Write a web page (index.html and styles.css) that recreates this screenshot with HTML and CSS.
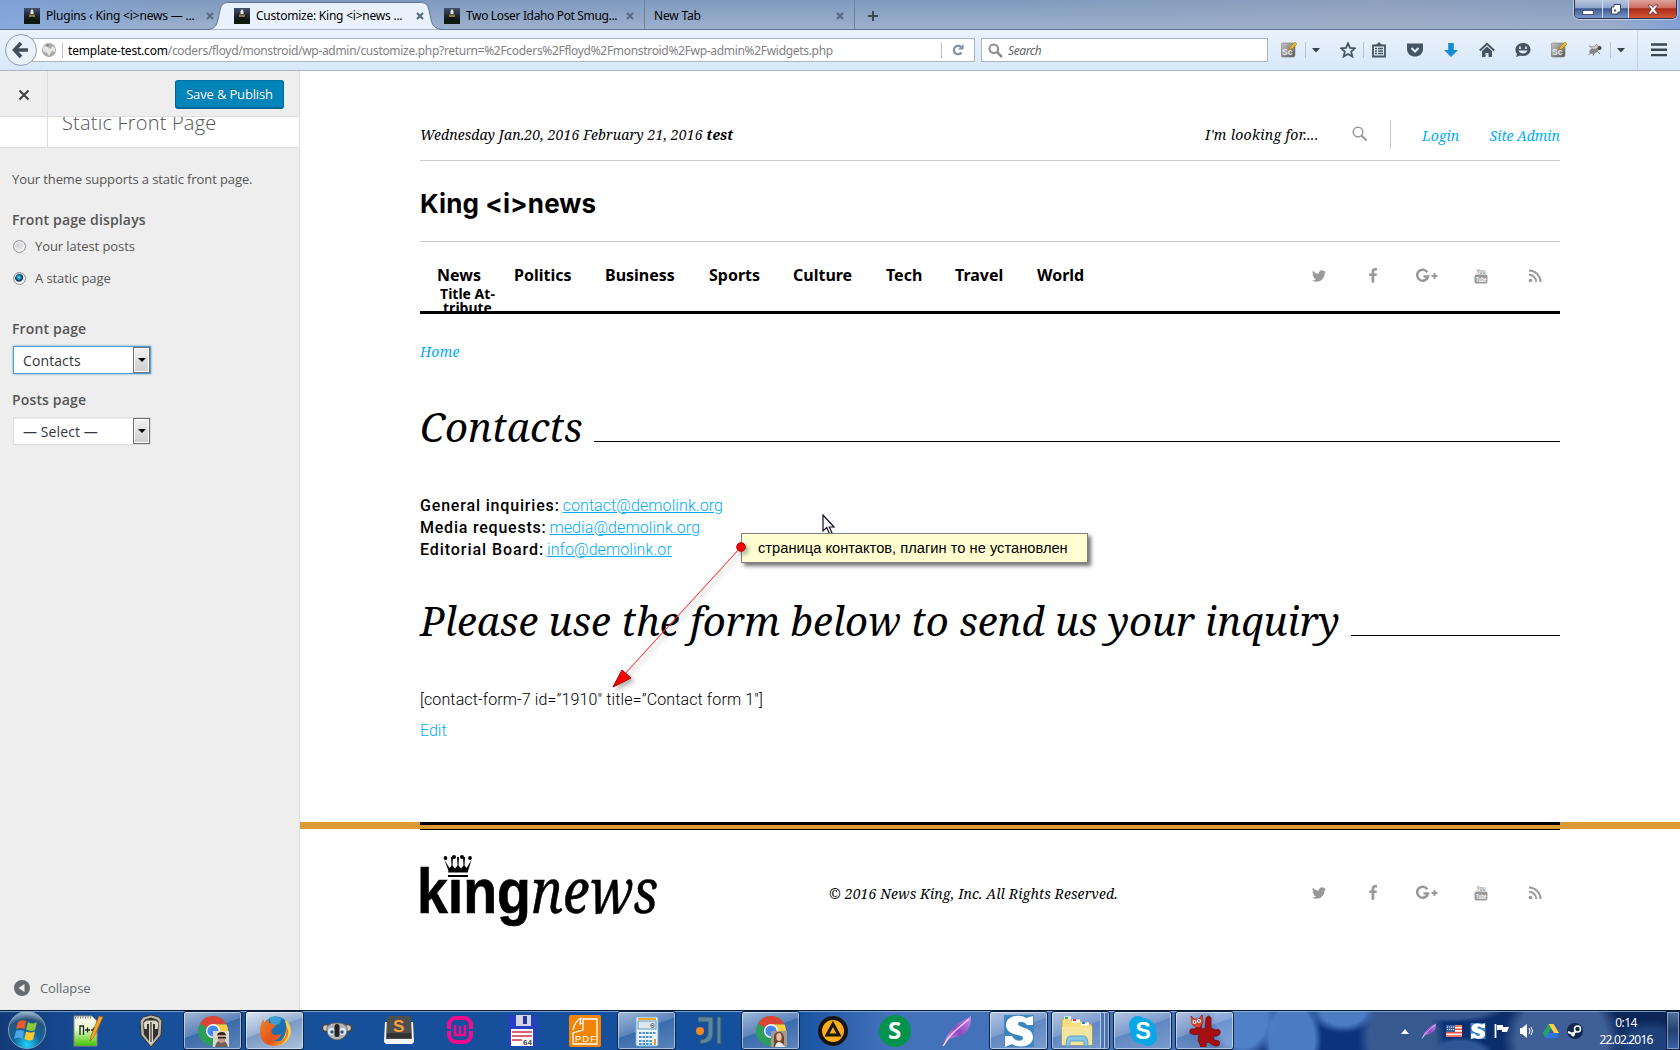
FILE: index.html
```html
<!DOCTYPE html>
<html lang="en">
<head>
<meta charset="utf-8">
<title>Customize: King &lt;i&gt;news</title>
<link rel="stylesheet" href="styles.css">
</head>
<body>
<svg class="defs" width="0" height="0">
  <defs>
    <linearGradient id="sky" x1="0" y1="0" x2="0" y2="1"><stop offset="0" stop-color="#42506b"/><stop offset=".55" stop-color="#1a2029"/><stop offset="1" stop-color="#121a10"/></linearGradient>
    <linearGradient id="steel" x1="0" y1="0" x2="1" y2="1"><stop offset="0" stop-color="#c9c9c9"/><stop offset="1" stop-color="#555"/></linearGradient>
    <radialGradient id="orb" cx=".5" cy=".9" r=".95"><stop offset="0" stop-color="#21d4ff"/><stop offset=".4" stop-color="#12649b"/><stop offset=".72" stop-color="#27527d"/><stop offset="1" stop-color="#c5dae4"/></radialGradient>
    <linearGradient id="fox" x1="0" y1="0" x2="1" y2="1"><stop offset="0" stop-color="#f0832b"/><stop offset=".6" stop-color="#e3521a"/><stop offset="1" stop-color="#f8ba2d"/></linearGradient>
    <linearGradient id="plume" x1="0" y1="1" x2="1" y2="0"><stop offset="0" stop-color="#e9a6ef"/><stop offset=".5" stop-color="#8d49c1"/><stop offset="1" stop-color="#c78be8"/></linearGradient>
    <linearGradient id="green" x1="0" y1="0" x2="0" y2="1"><stop offset="0" stop-color="#fff"/><stop offset=".45" stop-color="#e3f9c4"/><stop offset="1" stop-color="#3fc400"/></linearGradient>
    <symbol id="fav" viewBox="0 0 16 16"><rect width="16" height="16" fill="url(#sky)"/><path d="M6.500 6V3L8 1l1.500 2v3z" fill="#e8e4da"/><path d="M5 9V6.500h6V9z" fill="#8b7b45"/><path d="M0 11h5v-2h6v2h5v5H0z" fill="#10170f"/></symbol>
    <symbol id="x" viewBox="0 0 10 10"><path d="M2 2l6 6M8 2L2 8" stroke="#5c6c84" stroke-width="2.2"/></symbol>
    <symbol id="sc" viewBox="0 0 16 16"><rect y="1" width="14" height="14" rx="2" fill="url(#steel)" stroke="#777" stroke-width=".6"/><text x="1" y="13" font-family="Liberation Sans" font-size="8.500" font-weight="700" fill="#eee">Sc</text><path d="M8 8l1-3 5-5 2 2-5 5z" fill="#e9b929" stroke="#8a6a16" stroke-width=".5"/></symbol>
    <symbol id="tw" viewBox="0 0 1792 1792"><path d="M1684 408q-67 98-162 167 1 14 1 42 0 130-38 259.500t-115.500 248.500-184.500 210.500-258 146-323 54.500q-271 0-496-145 35 4 78 4 225 0 401-138-105-2-188-64.500t-114-159.500q33 5 61 5 43 0 85-11-112-23-185.500-111.500t-73.500-205.500v-4q68 38 146 41-66-44-105-115t-39-154q0-88 44-163 121 149 294.500 238.500t371.500 99.500q-8-38-8-74 0-134 94.500-228.500t228.500-94.500q140 0 236 102 109-21 205-78-37 115-142 178 93-10 186-50z" fill="#999"/></symbol>
    <symbol id="fb" viewBox="0 0 1792 1792"><path d="M1343 12v264h-157q-86 0-116 36t-30 108v189h293l-39 296h-254v759h-306v-759h-255v-296h255v-218q0-186 104-288.500t277-102.500q147 0 228 12z" fill="#999"/></symbol>
    <symbol id="gp" viewBox="0 0 22 16"><path d="M11.300 4.200A5.500 5.500 0 1 0 12 8.600H7.500" fill="none" stroke="#999" stroke-width="2.500"/><path d="M18.500 5v6M15.500 8h6" stroke="#999" stroke-width="2"/></symbol>
    <symbol id="yt" viewBox="0 0 14 17"><text x="2.500" y="6.500" font-family="Liberation Sans" font-size="8" font-weight="700" fill="#999" textLength="9" lengthAdjust="spacingAndGlyphs">You</text><rect x=".5" y="7.500" width="13" height="9" rx="1.800" fill="#999"/><text x="2" y="15" font-family="Liberation Sans" font-size="8" font-weight="700" fill="#fff" textLength="10.500" lengthAdjust="spacingAndGlyphs">Tube</text></symbol>
    <symbol id="rs" viewBox="0 0 14 14"><circle cx="2.500" cy="11.500" r="1.800" fill="#999"/><path d="M1 5.800A7.200 7.200 0 0 1 8.200 13M1 1.500A11.500 11.500 0 0 1 12.500 13" fill="none" stroke="#999" stroke-width="2"/></symbol>
    <symbol id="chrome" viewBox="0 0 32 32"><circle cx="16" cy="16" r="15" fill="#2d9d5c"/><path d="M16 16L3 8.500A15 15 0 0 1 29.500 9.500H16z" fill="#dc4437"/><path d="M16 9.500h13.500A15 15 0 0 1 15.500 31L22 19z" fill="#fdce42"/><circle cx="16" cy="16" r="7" fill="#fff"/><circle cx="16" cy="16" r="5.600" fill="#4587f3"/></symbol>
    <symbol id="plumeicon" viewBox="0 0 32 32"><path d="M3 31C4 22 9 14 18 8L30 1c0 7-1 12-5 16-5 5-12 5-17 7z" fill="url(#plume)"/><path d="M2 31C8 20 16 14 28 4" stroke="#f7d8ff" stroke-width="1.200" fill="none"/></symbol>
    <symbol id="ess" viewBox="0 0 32 32"><rect x="1" width="30" height="32" fill="#3c87be"/><path d="M30 1v9h-6c-3-4-9-4-9-1 0 4 15 3 15 13 0 11-16 11-21 7l-7 3V21h7c3 6 11 6 11 2 0-4-17-2-17-13C3 0 18-1 23 3z" fill="#fff"/></symbol>
  </defs>
</svg>

<header class="browser">
  <div class="tabstrip">
    <div class="tab first"><svg class="fav"><use href="#fav"/></svg><span class="tab-t t1">Plugins ‹ King &lt;i&gt;news — ...</span><svg class="x"><use href="#x"/></svg></div>
    <div class="tab active"><svg class="tabshape" viewBox="0 0 236 30"><path d="M0 29.500C10 28 9 23 12 10 13.500 4 16 2.500 21 2.500H212c5 0 7.500 1.500 9 7.500 3 13 2 18 13 19.500" fill="#e9f2fc" stroke="#5e7596"/></svg><svg class="fav"><use href="#fav"/></svg><span class="tab-t t2">Customize: King &lt;i&gt;news ...</span><svg class="x"><use href="#x"/></svg></div>
    <div class="tab third"><svg class="fav"><use href="#fav"/></svg><span class="tab-t t3">Two Loser Idaho Pot Smug...</span><svg class="x"><use href="#x"/></svg></div>
    <div class="tab sep"><span class="tab-t t4">New Tab</span><svg class="x"><use href="#x"/></svg></div>
    <div class="tab plus"><svg width="12" height="12"><path d="M6 1v10M1 6h10" stroke="#3c4b50" stroke-width="2"/></svg></div>
    <div class="winbtns"><span class="wb min"><i></i></span><span class="wb max"><svg width="12" height="12"><path d="M4 1.500h6.500V9H8v2H1.500V4H4z" fill="#fff" stroke="#3b4965"/><path d="M4 6.500h2v2H4z" fill="#3f547f"/></svg></span><span class="wb close"><svg width="12" height="11"><path d="M1 1h3l2 2.500L8 1h3L7.800 5.500 11 10H8L6 7.500 4 10H1l3.200-4.500z" fill="#fff" stroke="#5e3a43" stroke-width=".8"/></svg></span></div>
  </div>
  <div class="navbar">
    <svg class="back" viewBox="0 0 34 34"><circle cx="17" cy="17" r="15.500" fill="#e9f2fb" stroke="#8c9eb4"/><path d="M17 10l-6.500 7 6.500 7M11 17h13" fill="none" stroke="#424f5a" stroke-width="3.600"/></svg>
    <div class="url"><svg class="globe" viewBox="0 0 16 16"><circle cx="8" cy="8" r="7" fill="#a9a9a9"/><path d="M2 5l4-3 3 1-2 3 3 1 1-3 3 2v4l-3-1-2 3-1 2-2-3-4-2z" fill="#e6e6e6"/><path d="M6 2l3 1-2 2-3-1z" fill="#888"/></svg><i class="vs"></i><span class="addr"><b>template-test.com</b>/coders/floyd/monstroid/wp-admin/customize.php?return=%2Fcoders%2Ffloyd%2Fmonstroid%2Fwp-admin%2Fwidgets.php</span><i class="vs r"></i><svg class="reload" viewBox="0 0 12 12"><path d="M9.500 8.500A4.200 4.200 0 1 1 9 3" fill="none" stroke="#8290a4" stroke-width="2.200"/><path d="M11.500 0v5.500H6z" fill="#8290a4"/></svg></div>
    <div class="search"><svg width="15" height="15" viewBox="0 0 15 15"><circle cx="5.800" cy="5.800" r="4.300" fill="none" stroke="#8d8d8d" stroke-width="2"/><path d="M9 9l5 5" stroke="#8d8d8d" stroke-width="2.500"/></svg><em>Search</em></div>
    <div class="tools">
      <svg viewBox="0 0 16 16"><use href="#sc"/></svg><i class="vs"></i><svg class="caret" viewBox="0 0 8 5"><path d="M0 0h8L4 4.500z" fill="#38434d"/></svg>
      <svg class="m1" viewBox="0 0 16 16"><path d="M8 1.300l2 4.500 4.900.5-3.700 3.300 1.100 4.900L8 12l-4.300 2.500 1.100-4.900L1.100 6.300 6 5.800z" fill="none" stroke="#475461" stroke-width="1.800"/></svg><i class="vs v2"></i>
      <svg class="m2" viewBox="0 0 16 16"><path d="M2 3.500h12v11H2z" fill="none" stroke="#475461" stroke-width="1.800"/><path d="M5 3l3-3 3 3z" fill="#475461"/><path d="M4 6.500h2m1 0h5M4 9h2m1 0h5M4 11.500h2m1 0h5" stroke="#475461" stroke-width="1.500"/></svg>
      <svg class="m3" viewBox="0 0 16 16"><path d="M0 1.500h16V7c0 10-16 10-16 0z" fill="#475461"/><path d="M4.500 6L8 9.500 11.500 6" fill="none" stroke="#e4eefa" stroke-width="2"/></svg>
      <svg class="m3" viewBox="0 0 16 16"><path d="M5.200 1h5.600v7H15l-7 7-7-7h4.200z" fill="#168dd6"/></svg>
      <svg class="m3" viewBox="0 0 16 16"><path d="M.8 8.500L8 1.800l7.200 6.700" fill="none" stroke="#475461" stroke-width="2"/><path d="M3 9l5-4.500L13 9v6H9.500v-4h-3v4H3z" fill="#475461"/></svg>
      <svg class="m3" viewBox="0 0 16 16"><path d="M8 1c10 0 10 13 0 13-2 0-3-.3-4 0L1 15l1-3C-2 7 2 1 8 1z" fill="#475461"/><path d="M5 4.500v2.500m6-2.500v2.500" stroke="#e4eefa" stroke-width="1.700"/><path d="M3.500 8.500h9c-1.500 4-7.500 4-9 0z" fill="#e4eefa"/></svg>
      <svg class="m3" viewBox="0 0 16 16"><use href="#sc"/></svg>
      <svg class="m3" viewBox="0 0 16 16"><ellipse cx="7" cy="8.500" rx="5" ry="2.800" transform="rotate(-25 7 8.500)" fill="#888"/><circle cx="12.500" cy="6" r="2" fill="#444"/><path d="M6 7L2 4l5 1 3-3 1 4" stroke="#888" stroke-width=".7" fill="#d5d5d5"/><path d="M4 11l-3 2M7 11l-1 3m4-5l3 3" stroke="#777" stroke-width=".8" fill="none"/></svg><i class="vs v3"></i><svg class="caret" viewBox="0 0 8 5"><path d="M0 0h8L4 4.500z" fill="#38434d"/></svg><i class="vs v4"></i>
      <svg class="burger" viewBox="0 0 16 14"><path d="M0 1.500h16M0 6.800h16M0 12.100h16" stroke="#3b4852" stroke-width="2.400"/></svg>
    </div>
  </div>
</header>

<div class="page">
  <aside class="customizer">
    <div class="actions"><div class="closebox"><svg width="12" height="12"><path d="M1.500 1.500l9 9M10.500 1.500l-9 9" stroke="#444" stroke-width="2.200"/></svg></div><button class="publish">Save &amp; Publish</button></div>
    <div class="section-title"><div class="backbox"></div><h3>Static Front Page</h3></div>
    <div class="controls">
      <p class="desc">Your theme supports a static front page.</p>
      <div class="label l1">Front page displays</div>
      <div class="radio"><i></i>Your latest posts</div>
      <div class="radio on"><i></i>A static page</div>
      <div class="label l2">Front page</div>
      <div class="select focus"><span>Contacts</span><b></b></div>
      <div class="label l3">Posts page</div>
      <div class="select"><span>— Select —</span><b></b></div>
    </div>
    <div class="collapse"><svg width="16" height="16"><circle cx="8" cy="8" r="8" fill="#656b70"/><path d="M10.500 4v8l-6-4z" fill="#eee"/></svg>Collapse</div>
  </aside>

  <main class="preview">
    <div class="wrap">
      <div class="topbar"><div class="date">Wednesday Jan.20, 2016 February 21, 2016 <b>test</b></div><div class="looking">I'm looking for....</div><svg class="mag" width="16" height="16" viewBox="0 0 16 16"><circle cx="6" cy="6" r="4.800" fill="none" stroke="#999" stroke-width="1.500"/><path d="M9.500 9.500l5 5" stroke="#999" stroke-width="2"/></svg><div class="account"><a class="login">Login</a><a class="admin">Site Admin</a></div></div>
      <div class="brand">King &lt;i&gt;news</div>
      <nav class="menu"><ul><li>News<small>Title At-<br>tribute</small></li><li>Politics</li><li>Business</li><li>Sports</li><li>Culture</li><li>Tech</li><li>Travel</li><li>World</li></ul>
        <div class="social"><svg class="i-tw"><use href="#tw"/></svg><svg class="i-fb"><use href="#fb"/></svg><svg class="i-gp"><use href="#gp"/></svg><svg class="i-yt"><use href="#yt"/></svg><svg class="i-rs"><use href="#rs"/></svg></div></nav>
      <div class="crumb"><a>Home</a></div>
      <h1 class="title h-a"><span>Contacts</span></h1>
      <div class="contacts"><p class="c1"><b>General inquiries:</b> <a>contact@demolink.org</a></p><p class="c2"><b>Media requests:</b> <a>media@demolink.org</a></p><p class="c3"><b>Editorial Board:</b> <a>info@demolink.or</a></p></div>
      <h1 class="title h-b"><span>Please use the form below to send us your inquiry</span></h1>
      <p class="shortcode">[contact-form-7 id=”1910″ title=”Contact form 1″]</p>
      <p class="edit"><a>Edit</a></p>
    </div>
    <footer>
      <div class="stripe"><i></i></div>
      <div class="wrap foot">
        <svg class="logo" viewBox="0 0 237 75" width="237" height="75"><text x="-3" y="59" class="lk" textLength="114" lengthAdjust="spacingAndGlyphs">kıng</text><text x="111" y="59" class="ln" textLength="127" lengthAdjust="spacingAndGlyphs">news</text><path d="M28 18.500h20v-1.500l3.500-11-5 8-2-2.500.5-8.500h-2l.5 8.500-2.500 3-2.500-3 .5-8.500h-2l.5 8.500-2.500 3-2.500-3 .5-8.500h-2l.5 8.500-2 2.500-5-8 4 11z"/><path d="M28 21h20v2H28z"/><g><circle cx="25.500" cy="4" r="1.900"/><circle cx="34" cy="3" r="2"/><circle cx="42" cy="3" r="2"/><circle cx="50" cy="4" r="1.900"/></g></svg>
        <div class="copy">© 2016 News King, Inc. All Rights Reserved.</div>
        <div class="social"><svg class="i-tw"><use href="#tw"/></svg><svg class="i-fb"><use href="#fb"/></svg><svg class="i-gp"><use href="#gp"/></svg><svg class="i-yt"><use href="#yt"/></svg><svg class="i-rs"><use href="#rs"/></svg></div>
      </div>
    </footer>
  </main>
</div>

<svg class="pointer" width="14" height="22" viewBox="0 0 14 22"><path d="M1 1v16l3.800-3.500L7.500 20l2.500-1-2.700-6H12z" fill="#fff" stroke="#0b0b20" stroke-width="1.200"/></svg>
<div class="note">страница контактов, плагин то не установлен</div>
<svg class="arrow" width="150" height="160" viewBox="600 540 150 160"><path d="M741 547L622 677" stroke="#ff3a3a" stroke-width="1.100"/><path d="M613 687l9-17 9 8z" fill="#f00" stroke="#900"/><circle cx="741" cy="547" r="4.300" fill="#f00" stroke="#a00"/></svg>

<footer class="taskbar">
  <div class="start"><svg width="40" height="38" viewBox="0 0 40 38"><circle cx="20" cy="19" r="18.500" fill="url(#orb)" stroke="#7da4bd"/><path d="M11 11q4-3 8-1l-1.500 8q-4-2-8.500 0z" fill="#ef5a2b"/><path d="M21 11q4 3 9 0l-2 8q-4 2-9-.5z" fill="#8fc73e"/><path d="M9 20q4-2 8 0l-1.500 8q-4-3-8.500 0z" fill="#4aa6e8"/><path d="M19 20.500q4 2 9 0l-2 8q-4 2-8.500-.5z" fill="#fcc72c"/></svg></div>
  <div class="apps">
    <div class="app"><svg viewBox="0 0 32 32"><path d="M1 1h18l5 5v25H1z" fill="url(#green)" stroke="#888"/><path d="M2 2.500h16" stroke="#777" stroke-dasharray="1 1.500" stroke-width="2"/><path d="M7 20V11h3.500v9M12 15h5m-2.500-2.500v5M18 15h5m-2.500-2.500v5" stroke="#222" stroke-width="1.300" fill="none"/><path d="M17 26l1-5L26 1l4 1-9 20z" fill="#f3a727" stroke="#9d5b14" stroke-width=".7"/></svg></div>
    <div class="app"><svg viewBox="0 0 32 32"><path d="M16 0l8 2 3 4-1 14-10 12-10-12L5 6l3-4z" fill="#b9b5a9" stroke="#35332e"/><path d="M16 2.500l6 2 2 3-1 12-7 9-7-9-1-12 2-3z" fill="#34322f"/><path d="M8.500 8l3-2.500h9l3 2.500-1 6h-2.500V9H18v18l-2 2.500L14 27V9h-2v5H9.500z" fill="#d8d4c6"/><path d="M16 7v20" stroke="#34322f" stroke-width="1.200"/></svg></div>
    <div class="app open"><svg viewBox="0 0 32 32"><use href="#chrome"/><rect x="16" y="16" width="16" height="16" fill="#dcd7cd"/><path d="M18 32q1-6 6-7 6 1 7 7z" fill="#70615d"/><ellipse cx="24.500" cy="23" rx="4" ry="5" fill="#c39b83"/><path d="M20 21q0-4 5-4 4 0 4 4l-1-1h-7z" fill="#33261f"/><path d="M21 22h8v1.500h-3.500l-.5-.5-.5.5H21z" fill="#222"/></svg></div>
    <div class="app open lit"><svg viewBox="0 0 32 32"><circle cx="17" cy="14.500" r="13" fill="#1c6fb0"/><path d="M10 3q6-4 13 1l-3 5-7 2z" fill="#3ba0d4"/><path d="M27 5q8 9 3 18-3 6-12 8 8-8 9-15 1-6-1-10z" fill="#fbd34a"/><path d="M4 4l2 4 4-4v4q4 0 7 2.500l-4 3.500q-2 5 3 6 4 0 6-1-1 6-8 6 9 4 13-5 1-5 0-9 4 6 1 12-4 8-13 8Q2 30 1 18q0-8 3-14z" fill="url(#fox)"/></svg></div>
    <div class="app"><svg viewBox="0 0 32 32"><circle cx="5" cy="13" r="4.500" fill="#454545"/><circle cx="27" cy="13" r="4.500" fill="#454545"/><circle cx="5" cy="13" r="2.800" fill="#ccc"/><circle cx="27" cy="13" r="2.800" fill="#ccc"/><path d="M6 12q4-5 10-4 6-1 10 4 1 8-4 11-3 2-6 2t-6-2q-5-3-4-11z" fill="#b5b5b5" stroke="#555" stroke-width=".7"/><circle cx="10.500" cy="16.500" r="3.500" fill="#def"/><circle cx="21.500" cy="16.500" r="3.500" fill="#def"/><circle cx="11" cy="17" r="1.800" fill="#456"/><circle cx="21" cy="17" r="1.800" fill="#456"/><rect x="13.500" y="9" width="5" height="13" rx="2.500" fill="#222"/></svg></div>
    <div class="app"><svg viewBox="0 0 32 32"><path d="M2 7h28l1 20-2 2H3l-2-2z" fill="#f5f5f5"/><path d="M4 3q0-2 2-2h20q2 0 2 2l1 21H3z" fill="#4f4f4f"/><path d="M4 18h24v5H4z" fill="#333"/><text x="10" y="17" font-family="Liberation Sans" font-size="17" font-weight="700" fill="#f9a13a">S</text></svg></div>
    <div class="app"><svg viewBox="0 0 32 32"><rect x="4" y="3" width="22" height="24" rx="7" fill="none" stroke="#f20d8e" stroke-width="4"/><path d="M0 15h6.500m17 0H32" stroke="#185099" stroke-width="2"/><path d="M10 10v10h10V10M15 11v8" fill="none" stroke="#f20d8e" stroke-width="2.500"/></svg></div>
    <div class="app"><svg viewBox="0 0 32 32"><path d="M1 0h27l2 2v30H1z" fill="#273fc1"/><path d="M9 0h15v11H9z" fill="#d5d5e8"/><path d="M16 1h4v8h-4z" fill="#2036a0"/><path d="M4 14h22v17H4z" fill="#fff"/><path d="M5 17h20M5 21h20M5 25h10" stroke="#d42e45" stroke-width="1.300"/><text x="16" y="29.500" font-family="Liberation Sans" font-size="8" font-weight="700" fill="#444">64</text></svg></div>
    <div class="app"><svg viewBox="0 0 32 32"><rect width="32" height="32" rx="2" fill="#f28406"/><path d="M14 4h14v25H4V18l10-3zM4 15q2-9 8-12l-1 6 3-1" fill="none" stroke="#fff" stroke-width="1.300"/><rect x="5" y="18" width="22" height="10" fill="#f28406"/><text x="6" y="27" font-family="Liberation Sans" font-size="9.500" fill="#fff" textLength="21">PDF</text></svg></div>
    <div class="app open"><svg viewBox="0 0 32 32"><rect x="5" y="2" width="22" height="29" rx="1.500" fill="#eaf4fb" stroke="#6baed8"/><rect x="7" y="6" width="18" height="8" fill="#dce7ed" stroke="#689ab9"/><path d="M7 4h18" stroke="#f5a623" stroke-width="2"/><text x="19" y="13" font-family="Liberation Mono" font-size="8" fill="#345">0</text><path d="M8 18h17M8 22h13M8 26h13M8 29h13" stroke="#4b92c8" stroke-width="2" stroke-dasharray="2.500 1"/><path d="M23 24h2v6h-2z" fill="#f29a2e"/></svg></div>
    <div class="app"><svg viewBox="0 0 32 32"><path d="M5 2h15v17q0 9-13 10v-4q8-1 8-7V7H5z" fill="#5a879c" stroke="#305673"/><path d="M24 2h4v27h-4z" fill="#5a879c" stroke="#305673"/><circle cx="7" cy="16" r="4" fill="#f48a1c"/></svg></div>
    <div class="app open"><svg viewBox="0 0 32 32"><use href="#chrome"/><rect x="16" y="16" width="16" height="16" fill="#a49a8b"/><path d="M19 32V21q1-4 5-4t5 5v10z" fill="#71442e"/><ellipse cx="24" cy="22" rx="2.700" ry="4" fill="#e5bea4"/><path d="M20 32q1-5 4-5t6 5z" fill="#e9e7e8"/></svg></div>
    <div class="app"><svg viewBox="0 0 32 32"><circle cx="16" cy="16" r="15" fill="#181510"/><circle cx="16" cy="16" r="11" fill="#faad19"/><path d="M16 9l6 11H10z" fill="none" stroke="#1b1710" stroke-width="3"/></svg></div>
    <div class="app"><svg viewBox="0 0 32 32"><circle cx="16" cy="16" r="16" fill="#04934d"/><text x="9" y="24" font-family="Open Sans" font-weight="700" font-size="24" fill="#fff">S</text></svg></div>
    <div class="app"><svg viewBox="0 0 32 32"><use href="#plumeicon"/></svg></div>
    <div class="app open"><svg viewBox="0 0 32 32"><use href="#ess"/></svg></div>
    <div class="app open stack"><svg viewBox="0 0 32 32"><path d="M1 4h8l2 2h9l2 3h8l1 2v19H1z" fill="#f6df83" stroke="#c2a24b"/><path d="M3 3h7M11 6h8M20 9h8" stroke="#fff" stroke-width="3"/><path d="M4 3h3" stroke="#21b53d" stroke-width="2"/><path d="M12 5h3" stroke="#e5322a" stroke-width="2"/><path d="M21 8h3" stroke="#2b82d9" stroke-width="2"/><path d="M1 12h30v18H1z" fill="#f5e49c"/><path d="M5 31q0-10 4-10h14q4 0 4 10h-4v-5H9v5z" fill="#86c5e5" stroke="#5aa2ca"/></svg></div>
    <div class="app open"><svg viewBox="0 0 32 32"><circle cx="11" cy="10" r="9" fill="#08a8e8"/><circle cx="21" cy="22" r="9" fill="#08a8e8"/><circle cx="16" cy="16" r="13" fill="#08a8e8"/><text x="8.500" y="24" font-family="Liberation Sans" font-weight="700" font-size="23" fill="#fff">S</text></svg></div>
    <div class="app open"><svg viewBox="0 0 32 32"><path d="M2 1l3 3h5l3-4 1 7-2 5q2 3 4 2l1-11q3-4 5 0v10q5 3 7 1 4 2 1 6-4 2-6 1l1 4 5 1q2 5-3 5-5-1-7-4l-3 1v5q-3 2-5-1l-3-7 1-6q-5 2-9-1-1-5 4-4l3-1-5-4z" fill="#a60f12" stroke="#650808" stroke-width=".7"/><path d="M2 1l3 3h5l3-4 1 7-3 5H6L2 8z" fill="#d9402f"/><circle cx="5.500" cy="7" r="2" fill="#fff"/><circle cx="10" cy="6" r="2" fill="#fff"/><circle cx="5.500" cy="7" r=".8"/><circle cx="10" cy="6" r=".8"/></svg></div>
  </div>
  <div class="tray">
    <svg class="up" viewBox="0 0 8 5"><path d="M4 0l4 5H0z" fill="#fff"/></svg>
    <svg viewBox="0 0 32 32"><use href="#plumeicon"/></svg>
    <svg viewBox="0 0 16 16"><rect y="2" width="16" height="12" fill="#fff"/><path d="M0 3h16M0 6.300h16M0 9.600h16M0 13h16" stroke="#ed4b3c" stroke-width="1.600"/><rect y="2" width="9" height="7" fill="#3661a6"/><path d="M1 4h7M1 6.500h7" stroke="#fff" stroke-dasharray="1 1"/></svg>
    <svg viewBox="0 0 32 32"><use href="#ess"/></svg>
    <svg viewBox="0 0 16 16"><path d="M1.500 1v14" stroke="#fff" stroke-width="1.800"/><path d="M3 2h6v2h6l-2 5H8V7H3z" fill="#fff"/></svg>
    <svg viewBox="0 0 16 16"><path d="M2 5h2l5-4v14l-5-4H2z" fill="#fff"/><path d="M11 5q2 3 0 6M13 4q3 4 0 8" stroke="#fff" fill="none"/></svg>
    <svg viewBox="0 0 16 16"><path d="M5.500 1h5L16 10h-5z" fill="#fed14b"/><path d="M5.500 1L0 10l2.500 5L8 5.500z" fill="#21a566"/><path d="M5 10h11l-2.500 5h-11z" fill="#2e74e8"/></svg>
    <svg viewBox="0 0 16 16"><circle cx="8" cy="8" r="8" fill="#10284e"/><circle cx="10.500" cy="6" r="3" fill="none" stroke="#fff" stroke-width="1.600"/><path d="M1 9l5 2 3-3" stroke="#fff" stroke-width="2.200" fill="none"/><circle cx="6" cy="11.500" r="2" fill="#fff"/></svg>
  </div>
  <div class="clock"><span class="time">0:14</span><span class="day">22.02.2016</span></div>
  <div class="desk"></div>
</footer>
</body>
</html>
```
FILE: styles.css
```css
*{box-sizing:border-box}
body{margin:0;width:1680px;height:1050px;overflow:hidden;display:flex;flex-direction:column;position:relative;background:#fff;font-family:"Open Sans",sans-serif}
svg{display:block;flex:none}
p,h1,h3,ul{margin:0;padding:0}
.defs{position:absolute}

/* browser chrome */
.browser{height:71px;flex:none;font-family:"Noto Sans",sans-serif}
.tabstrip{height:30px;display:flex;background:linear-gradient(90deg,rgba(125,165,225,.7),rgba(150,170,200,0) 10%,rgba(150,170,200,0) 60%,rgba(165,172,186,.35) 82%,rgba(150,165,195,.2) 96%,rgba(120,155,220,.7)),linear-gradient(#7f99be,#9db1ce);border-bottom:1px solid #5e7596}
.tab{width:210px;height:29px;display:flex;align-items:center;padding:3px 0 0 14px;position:relative}
.tab.first{width:220px;padding-left:24px}
.tab.third{width:214px}
.tab>*{position:relative}
.tab .tabshape{position:absolute;left:-12px;top:0;width:236px;height:30px}
.fav{width:16px;height:16px;margin-right:6px}
.tab-t{font-size:12px;line-height:16px;color:#000;width:159px;white-space:nowrap}
.x{width:10px;height:10px}
.tab.sep{padding-left:9px;border-left:1px solid #6d819f;margin:0}
.tab.sep .tab-t{width:181px}
.tab.plus{width:40px;padding-left:12px;border-left:1px solid #6d819f}
.t1{letter-spacing:-.18px}.t2{letter-spacing:-.23px}.t3{letter-spacing:-.35px}.t4{letter-spacing:-.2px}
.winbtns{margin-left:auto;margin-right:3px;width:103px;height:19px;display:flex;border:1px solid #27344f;border-top:0;border-radius:0 0 5px 5px;overflow:hidden;box-shadow:0 0 0 1px rgba(255,255,255,.45)}
.wb{width:28px;display:flex;align-items:center;justify-content:center;background:linear-gradient(#b8c7df 0,#8ea4c9 45%,#3d5990 48%,#7a97c8);border-right:1px solid #d5deeb}
.wb.min i{width:12px;height:5px;background:#fff;border:1px solid #49587a;margin-top:6px}
.wb.max{width:27px}
.wb.close{width:47px;border:0;background:linear-gradient(#dfa49c 0,#cd6c5e 45%,#a92a18 48%,#d3573a)}
.navbar{height:41px;display:flex;align-items:center;background:linear-gradient(#eaf3fc,#d9e7f8);border-bottom:1px solid #a3b7cf;padding-left:4px}
.back{width:34px;height:34px;position:relative;z-index:1}
.url{width:943px;margin-left:-6px;height:24px;background:#fff;border:1px solid #a5b5ca;display:flex;align-items:center;padding-left:8px}
.globe{width:16px;height:16px}
.vs{width:1px;height:16px;background:#b9c3cf;margin-left:5px}
.vs.r{margin-left:0}
.addr{font-size:12px;letter-spacing:-.31px;color:#828282;margin-left:5px;width:873px;white-space:nowrap}
.addr b{font-weight:400;color:#000;letter-spacing:-.2px}
.reload{width:12px;height:12px;margin-left:10px}
.search{width:287px;height:24px;margin-left:6px;background:#fff;border:1px solid #a5b5ca;display:flex;align-items:center;padding-left:6px;font-size:12px;letter-spacing:-.4px;color:#666;gap:5px}
.tools{display:flex;align-items:center;margin-left:13px}
.tools svg{width:16px;height:16px}
.tools .vs{margin-left:8px}
.tools .caret{width:8px;height:5px;margin-left:6px}
.tools .m1{margin-left:20px}.tools .v2{margin-left:7px}.tools .m2{margin-left:7px}.tools .m3{margin-left:20px}
.tools .v3{margin-left:7px}.tools .v4{margin-left:12px;height:38px;background:#c3d1e2}
.tools .burger{margin-left:13px;height:14px}

/* customizer sidebar */
.page{display:flex;height:939px;flex:none}
.customizer{width:300px;background:#eee;border-right:1px solid #ddd;display:flex;flex-direction:column;color:#555}
.actions{height:46px;display:flex;border-bottom:1px solid #ddd;justify-content:space-between;padding-right:15px}
.closebox{width:48px;border-right:1px solid #ddd;display:flex;align-items:center;justify-content:center;padding-top:3px}
.publish{margin:9px 0 0;width:109px;height:28px;background:#0085ba;border:1px solid;border-color:#0073aa #006799 #006799;border-radius:3px;color:#fff;font:13px/26px "Open Sans",sans-serif;letter-spacing:-.15px;padding:0;box-shadow:0 1px 0 #006799;text-shadow:0 -1px 1px #006799}
.section-title{height:31px;background:#fff;border-bottom:1px solid #ddd;display:flex;overflow:hidden}
.backbox{width:48px;border-right:1px solid #ddd}
.section-title h3{font-weight:300;font-size:20px;line-height:28px;margin:-8px 0 0 14px;color:#555;letter-spacing:.2px}
.controls{padding:20px 12px 0;flex:1}
.desc{font-size:13px;line-height:22px;letter-spacing:-.1px}
.label{font-weight:600;font-size:14px;line-height:20px;letter-spacing:.15px}
.l1{margin-top:20px}
.radio{display:flex;align-items:center;font-size:13px;line-height:32px;height:32px;letter-spacing:-.08px}
.radio i{width:13px;height:13px;border-radius:50%;border:1px solid #8e8f8f;background:radial-gradient(circle at 35% 35%,#d0d3d8,#fff);box-shadow:inset 0 0 0 1px #f4f4f4;margin:0 9px 0 1px}
.radio.on i{background:radial-gradient(circle at 45% 40%,#8fe0ff 0,#148fc4 20%,#0b2d44 42%,#e9e9e9 52%,#fff)}
.l2{margin-top:25px}
.select{width:138px;height:28px;margin:7px 0 0 1px;background:#fff;border:1px solid #ddd;display:flex;font-size:14px;color:#32373c;line-height:27px;padding-left:9px;letter-spacing:.1px;justify-content:space-between;box-shadow:inset 0 1px 2px rgba(0,0,0,.07)}
.select.focus{border-color:#5b9dd9;box-shadow:0 0 2px rgba(30,140,190,.8)}
.select b{width:17px;border:1px solid #6f6f6f;background:linear-gradient(#f3f3f3,#ccc);box-shadow:inset 0 0 0 1px #fff;display:flex;align-items:center;justify-content:center}
.select b::after{content:"";border:4px solid transparent;border-top-color:#000;border-bottom:0}
.l3{margin-top:16px}
.collapse{height:45px;display:flex;align-items:center;font-size:13px;letter-spacing:-.1px;gap:10px;padding-left:14px;color:#656b70}

/* site preview */
.preview{width:1380px;display:flex;flex-direction:column;font-family:"Noto Serif","Droid Serif","Liberation Serif",serif;color:#000}
.wrap{width:1140px;margin-left:120px}
.preview a{color:#02acf7}
.topbar{height:90px;border-bottom:1px solid #ccc;padding-top:38px;display:flex;align-items:center;font-style:italic;font-size:14px}
.date{width:784px;letter-spacing:.13px;white-space:nowrap}
.looking{width:148px;letter-spacing:.32px;padding-left:1px}
.mag{margin-top:-2px}
.account{margin-left:22px;height:29px;border-left:1px solid #ccc;padding:2px 0 0 31px;display:flex;width:170px;line-height:28px;justify-content:space-between;white-space:nowrap;flex:none}
.brand{height:81px;border-bottom:1px solid #ccc;font:700 26px/80px Inter,sans-serif;padding-top:3px;letter-spacing:.1px}
.menu{height:72px;border-bottom:3px solid #000;display:flex;justify-content:space-between;overflow:hidden}
.menu ul{list-style:none;display:grid;grid-template-columns:77px 91px 104px 84px 93px 69px 82px 60px;padding:22px 0 0 17px;font:700 16px/22px "Noto Sans",sans-serif}
.menu small{display:block;font-size:14px;line-height:14px;text-align:center;width:61px;margin-top:1px}
.social{width:270px;margin-right:-2px;display:grid;grid-template-columns:repeat(5,54px);justify-items:center;align-items:center;padding-bottom:2px}
.i-tw{width:16px;height:16px}.i-fb{width:16px;height:16px}.i-gp{width:22px;height:16px}.i-yt{width:14px;height:17px}.i-rs{width:14px;height:14px}
.crumb{margin-top:26px;font-style:italic;font-size:14px;line-height:23px;letter-spacing:.25px}
.title{display:flex;align-items:baseline;font-weight:400;font-style:italic;font-size:40px;line-height:60px;height:60px;white-space:nowrap}
.title::after{content:"";flex:1;height:1px;background:#000;margin-left:11px}
.h-a{margin-top:34px}
.contacts{margin-top:38px;font:300 16px/22px Roboto,sans-serif}
.contacts b{font-weight:500}
.c1 b{letter-spacing:.83px}.c2 b{letter-spacing:.78px}.c3 b{letter-spacing:.93px}
.contacts a{text-decoration:underline;letter-spacing:.08px;margin-left:-1px}
.h-b{margin-top:30px}
.shortcode{margin-top:38px;font:300 16px/22px Roboto,sans-serif;letter-spacing:.13px}
.edit{margin-top:9px;font:300 16px/22px Roboto,sans-serif}
.preview footer{margin-top:auto;height:188px}
.stripe{height:8px;background:linear-gradient(#dd9933 7px,#fff 7px)}
.stripe i{display:block;width:1140px;height:8px;margin-left:120px;background:#dd9933;border-top:3px solid #000;border-bottom:1px solid #000}
.foot{display:flex;padding-top:24px;align-items:flex-start}
.logo{overflow:visible}
.lk{font:700 63px "Liberation Sans",sans-serif;stroke:#000;stroke-width:.7px}
.ln{font:italic 62px "Noto Serif","Liberation Serif",serif;stroke:#000;stroke-width:.6px}
.copy{margin:29px 0 0 172px;width:463px;font-style:italic;font-size:14px;line-height:22px;letter-spacing:.12px;white-space:nowrap}
.foot .social{padding-top:30px}

/* annotation */
.pointer{position:absolute;left:822px;top:514px}
.note{position:absolute;left:741px;top:533px;width:347px;height:30px;background:#ffffd2;border:1px solid #808080;box-shadow:3px 3px 4px rgba(0,0,0,.55);font:14.7px/29px "Liberation Sans",sans-serif;padding-left:16px;white-space:nowrap;color:#000}
.arrow{position:absolute;left:600px;top:540px;filter:drop-shadow(3px 3px 2px rgba(0,0,0,.3))}

/* taskbar */
.taskbar{height:40px;flex:none;display:flex;border-top:1px solid #0a1730;box-shadow:inset 0 1px 0 rgba(150,185,230,.75);background:radial-gradient(ellipse 36px 44px at 1242px 6px,#5080c8 70%,transparent),radial-gradient(ellipse 30px 44px at 1292px 28px,#4a7bc3 75%,transparent),radial-gradient(ellipse 34px 22px at 1343px 0,#4d7cc2 65%,transparent),radial-gradient(ellipse 44px 52px at 1402px 28px,#38598f 75%,transparent),radial-gradient(ellipse 34px 18px at 1460px 44px,#2f5795 75%,transparent),radial-gradient(ellipse 54px 12px at 1450px 0,#35588f 65%,transparent),radial-gradient(ellipse 60px 56px at 1562px 28px,#3f5f97 75%,transparent),radial-gradient(ellipse 40px 26px at 1650px 34px,#1f427c 60%,transparent),linear-gradient(90deg,#143a78 0,#184f99 6%,#14509f 47%,#4472ba 53%,#4171b8 70%,#0d3277 74%,#0a3580 82%,#0b2a62 92%,#0b2454)}
.start{width:58px;padding-left:7px}
.apps{display:flex}
.app{width:62px;height:39px;padding:3px 0 0 14px;border:1px solid transparent}
.app svg{width:32px;height:32px}
.app.open{border:1px solid #0d2444;width:59px;padding-left:13px;margin:0 2px 0 1px;border-radius:3px;background:linear-gradient(160deg,rgba(255,255,255,.6),rgba(255,255,255,.3) 45%,rgba(255,255,255,.16) 46%,rgba(255,255,255,.3));box-shadow:inset 0 0 0 1px rgba(255,255,255,.5)}
.app.lit{background:linear-gradient(160deg,rgba(255,255,255,.85),rgba(255,255,255,.55) 45%,rgba(255,255,255,.42) 46%,rgba(255,255,255,.65))}
.app.stack{padding-left:9px;box-shadow:inset 0 0 0 1px rgba(255,255,255,.5),inset -4px 0 0 #4c74ae,inset -5px 0 0 #b9cbe4,inset -8px 0 0 #4c74ae,inset -9px 0 0 #b9cbe4}
.tray{margin-left:auto;display:flex;align-items:center;gap:8.3px;padding-top:1px}
.tray svg{width:16px;height:16px}
.tray .up{width:8px;height:5px;margin-right:4px}
.clock{width:80px;display:flex;flex-direction:column;align-items:center;color:#fff;font:12px/17px "Noto Sans",sans-serif;padding-top:3px;margin:0 0 0 3px}
.day{letter-spacing:-.85px}.time{letter-spacing:-.6px}
.desk{width:14px;border:1px solid #0b1d3c;box-shadow:inset 0 0 0 1px rgba(180,200,230,.6);background:linear-gradient(#52709d,#23406f 50%,#3a62a5)}
```
